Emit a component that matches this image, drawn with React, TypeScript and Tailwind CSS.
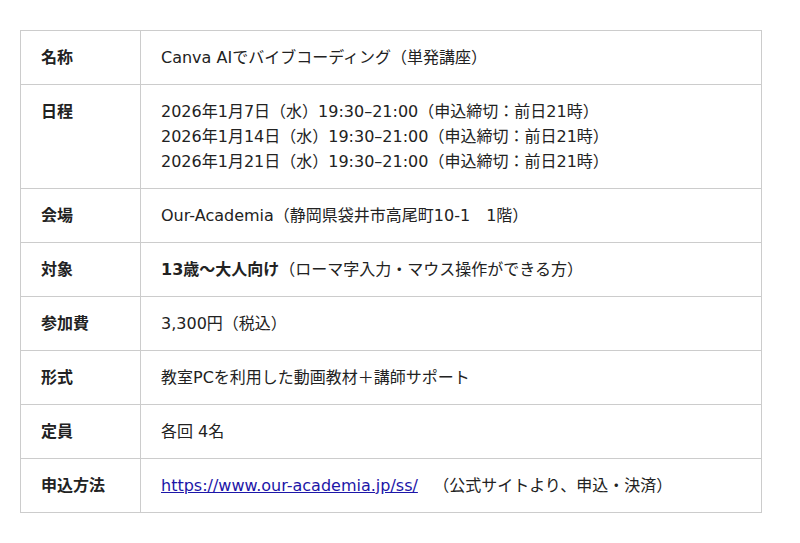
const rows: { label: string; content: React.ReactNode }[] = [
  { label: "名称", content: "Canva AIでバイブコーディング（単発講座）" },
  {
    label: "日程",
    content: (
      <>
        2026年1月7日（水）19:30–21:00（申込締切：前日21時）
        <br />
        2026年1月14日（水）19:30–21:00（申込締切：前日21時）
        <br />
        2026年1月21日（水）19:30–21:00（申込締切：前日21時）
      </>
    ),
  },
  { label: "会場", content: "Our-Academia（静岡県袋井市高尾町10-1　1階）" },
  {
    label: "対象",
    content: (
      <>
        <strong className="font-bold">13歳〜大人向け</strong>（ローマ字入力・マウス操作ができる方）
      </>
    ),
  },
  { label: "参加費", content: "3,300円（税込）" },
  { label: "形式", content: "教室PCを利用した動画教材＋講師サポート" },
  { label: "定員", content: "各回 4名" },
  {
    label: "申込方法",
    content: (
      <>
        <a href="#" className="text-[#1c16a8] underline">
          https://www.our-academia.jp/ss/
        </a>
        {"\u00a0\u00a0\u00a0（公式サイトより、申込・決済）"}
      </>
    ),
  },
];

export default function App() {
  return (
    <div className="bg-white min-h-[543px] pt-[30px] px-5 font-['DejaVu_Sans','Noto_Sans_CJK_JP',sans-serif] text-[16px] leading-[25px] text-[#222]">
      <table className="w-[742px] border-collapse">
        <tbody>
          {rows.map((r) => (
            <tr key={r.label}>
              <th className="w-[120px] border border-[#ccc] px-5 py-[14px] text-left align-top font-bold">
                {r.label}
              </th>
              <td className="border border-[#ccc] px-5 py-[14px] align-top">{r.content}</td>
            </tr>
          ))}
        </tbody>
      </table>
    </div>
  );
}
